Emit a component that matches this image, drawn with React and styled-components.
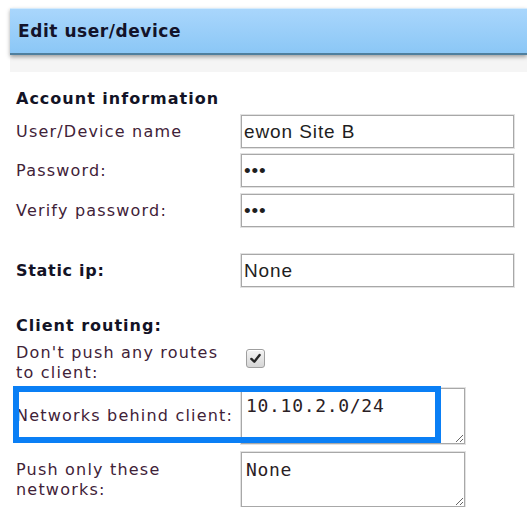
import React from "react";
import styled, { createGlobalStyle } from "styled-components";

const GlobalStyle = createGlobalStyle`
  html, body {
    margin: 0;
    padding: 0;
    background: #ffffff;
    overflow: hidden;
  }
  body {
    font-family: "DejaVu Sans", Verdana, sans-serif;
  }
`;

const Panel = styled.div`
  margin: 8px 0 0 10px;
`;

const Header = styled.div`
  display: flex;
  align-items: center;
  height: 44px;
  padding-left: 8px;
  border-top: 1px solid #d3eafc;
  border-bottom: 2px solid #4f7f9e;
  background: linear-gradient(#a9d6fc, #8bc7f6);
  box-shadow: 0 2px 4px rgba(0, 0, 0, 0.35);
  position: relative;
`;

const Title = styled.h1`
  margin: 0;
  font-size: 17px;
  font-weight: bold;
  letter-spacing: 0.55px;
  color: #13132a;
`;

const SubBar = styled.div`
  height: 17px;
  background: #f5f5f5;
`;

const Form = styled.form`
  padding: 17px 0 0 6px;
`;

const SectionTitle = styled.div`
  margin-top: ${(p) => p.$mt || 0}px;
  font-size: 16px;
  line-height: 20px;
  font-weight: bold;
  letter-spacing: 1px;
  color: #131326;
`;

const Row = styled.div`
  position: relative;
  display: flex;
  align-items: ${(p) => p.$align || "center"};
  margin-top: ${(p) => p.$mt || 0}px;
`;

const Label = styled.label`
  flex: 0 0 225px;
  box-sizing: border-box;
  padding-right: 4px;
  font-size: 16px;
  line-height: 20px;
  letter-spacing: ${(p) => (p.$bold ? "0.7px" : "1.2px")};
  color: ${(p) => (p.$bold ? "#131326" : "#3f2238")};
  font-weight: ${(p) => (p.$bold ? "bold" : "normal")};
`;

const TextInput = styled.input`
  box-sizing: border-box;
  width: 273px;
  height: 33px;
  margin: 0;
  padding: 0 2px;
  border: 1px solid #a8a8a8;
  box-shadow: 0 0 0 1px #e2e2e2;
  border-radius: 0;
  font-family: "Liberation Sans", Arial, sans-serif;
  font-size: 19px;
  letter-spacing: 0.9px;
  color: #1e1e1e;
  outline: none;
`;

const TextArea = styled.textarea`
  box-sizing: border-box;
  width: 224px;
  height: ${(p) => p.$h}px;
  margin: 0;
  padding: 6px 4px;
  border: 1px solid #a8a8a8;
  box-shadow: 0 0 0 1px #e2e2e2;
  border-radius: 0;
  font-family: "DejaVu Sans Mono", "Liberation Mono", monospace;
  font-size: 18px;
  line-height: 22px;
  letter-spacing: 0.7px;
  color: #2a2024;
  outline: none;
`;

const CheckBox = styled.span`
  display: flex;
  align-items: center;
  justify-content: center;
  box-sizing: border-box;
  width: 19px;
  height: 19px;
  margin: 6px 0 0 5px;
  border: 1px solid #9f9f9f;
  border-radius: 3px;
  background: linear-gradient(#f4f4f4, #d6d6d6);
  box-shadow: inset 0 1px 0 #ffffff;
`;

// blue frame drawn over the "networks behind client" row
const Highlight = styled.div`
  position: absolute;
  left: -3px;
  top: -2px;
  width: 428px;
  height: 57px;
  box-sizing: border-box;
  border: 6px solid #0a7ff5;
  pointer-events: none;
`;

export default function App() {
  return (
    <>
      <GlobalStyle />
      <Panel>
        <Header>
          <Title>Edit user/device</Title>
        </Header>
        <SubBar />
        <Form onSubmit={(e) => e.preventDefault()}>
          <SectionTitle>Account information</SectionTitle>
          <Row $mt={6}>
            <Label>User/Device name</Label>
            <TextInput type="text" defaultValue="ewon Site B" />
          </Row>
          <Row $mt={6}>
            <Label>Password:</Label>
            <TextInput type="password" defaultValue="abc" />
          </Row>
          <Row $mt={7}>
            <Label>Verify password:</Label>
            <TextInput type="password" defaultValue="abc" />
          </Row>

          <Row $mt={27}>
            <Label $bold>Static ip:</Label>
            <TextInput type="text" defaultValue="None" />
          </Row>

          <SectionTitle $mt={29}>Client routing:</SectionTitle>
          <Row $mt={7} $align="flex-start">
            <Label>Don't push any routes to client:</Label>
            <CheckBox>
              <svg width="13" height="13" viewBox="0 0 12 12">
                <path
                  d="M2.2 6.4 L4.9 9 L9.8 2.8"
                  fill="none"
                  stroke="#262626"
                  strokeWidth="2.2"
                  strokeLinecap="round"
                  strokeLinejoin="round"
                />
              </svg>
            </CheckBox>
          </Row>
          <Row $mt={5}>
            <Label>Networks behind client:</Label>
            <TextArea $h={56} defaultValue="10.10.2.0/24" />
            <Highlight />
          </Row>
          <Row $mt={8}>
            <Label>Push only these networks:</Label>
            <TextArea $h={55} defaultValue="None" />
          </Row>
        </Form>
      </Panel>
    </>
  );
}
